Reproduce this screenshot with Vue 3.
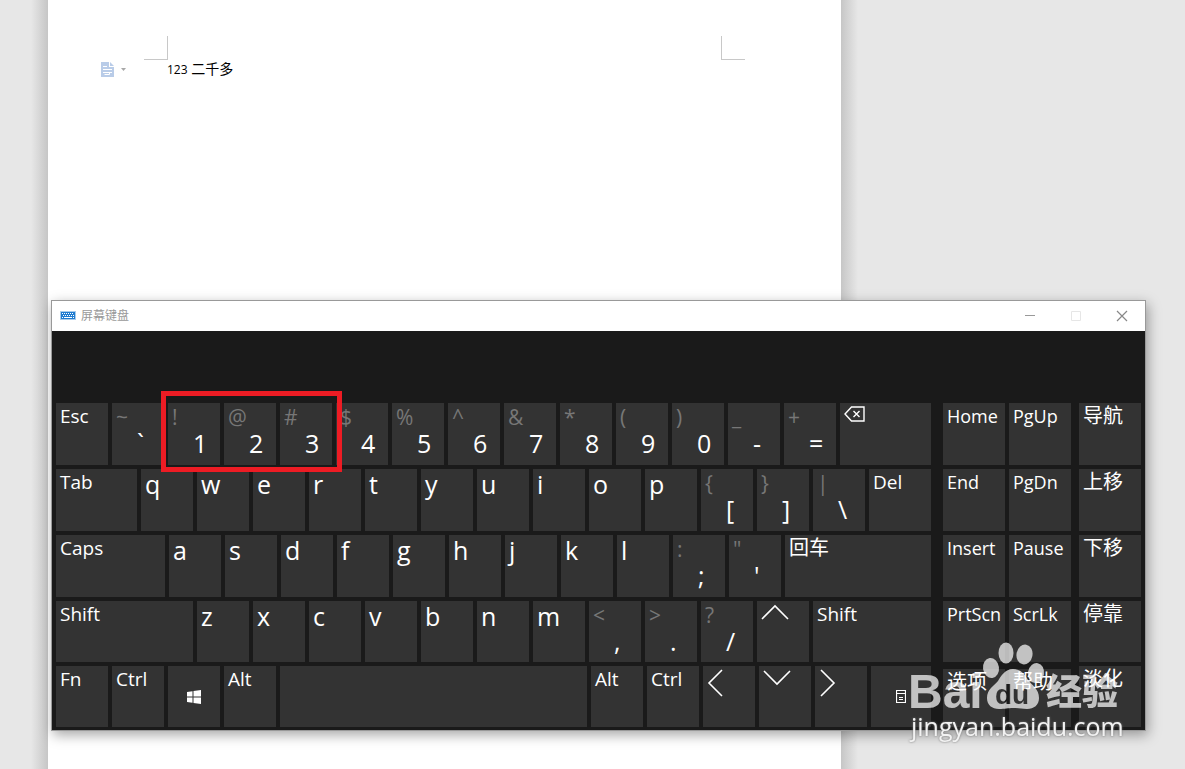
<script setup>
const k = (label, w = 52) => ({ label, w, kind: 'letter' })
const t = (label, w = 52) => ({ label, w, kind: 'word' })
const d = (shift, label) => ({ shift, label, w: 52, kind: 'dual' })
const i = (icon, name, w = 52) => ({ icon, name, w, kind: 'icon' })

const mainRows = [
  [
    t('Esc'), d('~', '`'), d('!', '1'), d('@', '2'), d('#', '3'), d('$', '4'), d('%', '5'), d('^', '6'),
    d('&', '7'), d('*', '8'), d('(', '9'), d(')', '0'), d('_', '-'), d('+', '='), i('back', 'Backspace', 91),
  ],
  [
    t('Tab', 81), ...'qwertyuiop'.split('').map((c) => k(c)),
    d('{', '['), d('}', ']'), d('|', '\\'), t('Del', 62),
  ],
  [
    t('Caps', 109), ...'asdfghjkl'.split('').map((c) => k(c)),
    d(':', ';'), d('"', "'"), { label: '回车', w: 146, kind: 'word cjk' },
  ],
  [
    t('Shift', 137), ...'zxcvbnm'.split('').map((c) => k(c)),
    d('<', ','), d('>', '.'), d('?', '/'), i('up', 'Up'), t('Shift', 118),
  ],
  [
    t('Fn'), t('Ctrl'), i('win', 'Windows'), t('Alt'), { label: '', name: 'Space', w: 307, kind: 'word' },
    t('Alt'), t('Ctrl'), i('left', 'Left'), i('down', 'Down'), i('right', 'Right'), i('menu', 'Menu', 60),
  ],
]

const s = (label, kind = 'word narrow') => ({ label, kind })
const sideRows = [
  [s('Home'), s('PgUp'), s('导航', 'word cjk')],
  [s('End'), s('PgDn'), s('上移', 'word cjk')],
  [s('Insert'), s('Pause'), s('下移', 'word cjk')],
  [s('PrtScn'), s('ScrLk'), s('停靠', 'word cjk')],
  [s('选项', 'word cjk low'), s('帮助', 'word cjk low'), s('淡化', 'word cjk')],
]

const arrows = {
  up: 'M1 15 14 2 27 15',
  down: 'M1 2 14 15 27 2',
  left: 'M15 1 2 14 15 27',
  right: 'M2 1 15 14 2 27',
}
</script>

<template>
  <div class="desktop">
    <main class="page">
      <div class="marks">
        <span class="mark mark-left"></span>
        <span class="mark mark-right"></span>
      </div>
      <div class="line">
        <button class="paste" type="button" aria-label="Page options">
          <svg width="13" height="15" viewBox="0 0 13 15">
            <path d="M0 0h8v5h5v10H0z" fill="#b9cce8" />
            <path d="M9 0l4 4H9z" fill="#b9cce8" />
            <path d="M2 4.500h4M2 7.500h9M2 10.500h9M8.500 10.500v2h-5" fill="none" stroke="#fff" />
          </svg>
          <svg width="5" height="3" viewBox="0 0 5 3"><path d="M0 0h5L2.500 3z" fill="#a8a8a8" /></svg>
        </button>
        <p class="text"><span class="digits">123</span> 二千多</p>
      </div>
    </main>

    <section class="osk">
      <header class="titlebar">
        <svg class="app-icon" width="16" height="10" viewBox="0 0 16 10">
          <rect x=".5" y=".5" width="15" height="8" fill="#1f7bd0" stroke="#a9cbea" />
          <path d="M2 2.500h12M3 4.500h11" stroke="#fff" stroke-dasharray="1 1" />
          <path d="M2 6.500h1M4 6.500h8M13 6.500h1" stroke="#fff" />
        </svg>
        <h1 class="title">屏幕键盘</h1>
        <div class="controls">
          <button type="button" aria-label="Minimize">
            <svg width="12" height="12" viewBox="0 0 12 12"><path d="M1 5.500h10" stroke="#999" /></svg>
          </button>
          <button type="button" aria-label="Maximize" disabled>
            <svg width="12" height="12" viewBox="0 0 12 12"><path d="M1.500 1.500h9v9h-9z" fill="none" stroke="#e6e6e6" /></svg>
          </button>
          <button type="button" aria-label="Close">
            <svg width="12" height="12" viewBox="0 0 12 12"><path d="M1 1l10 10M11 1L1 11" stroke="#888" stroke-width="1.200" /></svg>
          </button>
        </div>
      </header>

      <div class="board">
        <div class="main-keys">
          <div v-for="(row, r) in mainRows" :key="r" class="row">
            <button
              v-for="(key, c) in row"
              :key="c"
              type="button"
              class="key"
              :class="key.kind"
              :style="{ flexGrow: key.w }"
              :aria-label="key.name"
            >
              <template v-if="key.kind === 'dual'">
                <span class="shifted">{{ key.shift }}</span>
                <span class="base">{{ key.label }}</span>
              </template>
              <template v-else-if="key.kind === 'icon'">
                <svg v-if="key.icon === 'back'" class="glyph" width="21" height="16" viewBox="0 0 21 16">
                  <path d="M7.500 1H20v14H7.500L1 8z" fill="none" stroke="#fff" stroke-width="1.400" />
                  <path d="M9.500 5l6 6M15.500 5l-6 6" stroke="#fff" stroke-width="1.400" />
                </svg>
                <svg v-else-if="key.icon === 'win'" class="centred" width="14" height="14" viewBox="0 0 14 14">
                  <path d="M0 2l5.500-.8v5.300H0zM6.500 1L14 0v6.500H6.500zM0 7.500h5.500v5.300L0 12zM6.500 7.500H14V14l-7.500-1z" fill="#fff" />
                </svg>
                <svg v-else-if="key.icon === 'menu'" class="centred" width="10" height="13" viewBox="0 0 10 13">
                  <path d="M.5.5h9v12h-9zM0 3.500h10M3 7.500h4M3 9.500h4" fill="none" stroke="#fff" stroke-width="1.200" />
                </svg>
                <svg v-else-if="key.icon === 'up' || key.icon === 'down'" class="glyph" width="28" height="17" viewBox="0 0 28 17">
                  <path :d="arrows[key.icon]" fill="none" stroke="#fff" stroke-width="1.600" />
                </svg>
                <svg v-else class="glyph" width="17" height="28" viewBox="0 0 17 28">
                  <path :d="arrows[key.icon]" fill="none" stroke="#fff" stroke-width="1.600" />
                </svg>
              </template>
              <span v-else class="label">{{ key.label }}</span>
            </button>
          </div>
          <span class="highlight"></span>
        </div>

        <div class="side-keys">
          <div v-for="(row, r) in sideRows" :key="r" class="row">
            <button v-for="key in row" :key="key.label" type="button" class="key" :class="key.kind">
              <span class="label">{{ key.label }}</span>
            </button>
          </div>
        </div>
      </div>
    </section>

    <svg class="watermark" width="220" height="110" viewBox="0 0 220 110" aria-label="Baidu 经验 jingyan.baidu.com">
      <mask id="paw-mask">
        <rect width="220" height="110" fill="#fff" />
        <text x="88" y="66" class="wm-du">du</text>
      </mask>
      <g fill="#fff" opacity=".7">
        <text x="1" y="70" class="wm-latin">Bai</text>
        <ellipse cx="84" cy="30" rx="8" ry="10" transform="rotate(-8 84 30)" />
        <ellipse cx="99" cy="15" rx="7.500" ry="10.500" />
        <ellipse cx="117.500" cy="16.500" rx="8" ry="10" transform="rotate(10 117.500 16.500)" />
        <ellipse cx="129" cy="35" rx="8" ry="10" transform="rotate(10 129 35)" />
        <path
          mask="url(#paw-mask)"
          d="M106 31C98 31 94 38 91 43C87 48 80 51 80 60C80 67 85 71 92 71C98 71 101 70 106 70C111 70 114 71 120 71C127 71 132 67 132 60C132 51 125 47 121 42C118 37 114 31 106 31Z"
        />
        <text x="139" y="67" class="wm-cjk">经验</text>
      </g>
      <text x="4" y="98" class="wm-url">jingyan.baidu.com</text>
    </svg>
  </div>
</template>

<style>
body {
  margin: 0;
  background: #e7e7e7;
}
</style>

<style scoped>
.desktop {
  position: relative;
  min-height: 100vh;
  overflow: hidden;
  display: flex;
  background: #e7e7e7;
  font-family: "Open Sans", "Noto Sans CJK SC", sans-serif;
}
.page {
  position: relative;
  box-sizing: border-box;
  width: 67.1%;
  margin-left: 47px;
  padding: 36px 96px 0 53px;
  background: #fff;
  border: solid #d8d8d8;
  border-width: 0 1px;
}
.page::before,
.page::after {
  content: "";
  position: absolute;
  top: 0;
  bottom: 0;
  width: 17px;
}
.page::before {
  right: 100%;
  background: linear-gradient(to left, #c6c6c6, #e7e7e7);
}
.page::after {
  left: 100%;
  background: linear-gradient(to right, #c6c6c6, #e7e7e7);
}
.marks {
  display: flex;
  justify-content: space-between;
  margin-left: 43px;
}
.mark {
  width: 23px;
  height: 23px;
  border: 0 solid #c8c8c8;
  border-bottom-width: 1px;
}
.mark-left {
  border-right-width: 1px;
}
.mark-right {
  border-left-width: 1px;
}
.line {
  display: flex;
  align-items: center;
  height: 18px;
}
.paste {
  display: flex;
  align-items: center;
  gap: 7px;
  width: 66px;
  padding: 0;
  border: 0;
  background: none;
}
.text {
  margin: 0;
  font-size: 14px;
  line-height: 18px;
  color: #000;
}
.digits {
  font-size: 12px;
}
.osk {
  position: absolute;
  top: 300px;
  left: 51px;
  right: 39px;
  border: 1px solid #999;
  background: #1a1a1a;
  box-shadow: 2px 4px 12px rgba(0, 0, 0, 0.35);
}
.titlebar {
  display: flex;
  align-items: center;
  height: 30px;
  padding-left: 8px;
  background: #fff;
}
.title {
  margin: 0 auto 0 5px;
  font-size: 12px;
  font-weight: 400;
  line-height: 18px;
  color: #999;
}
.controls {
  display: flex;
}
.controls button {
  display: flex;
  align-items: center;
  justify-content: center;
  width: 46px;
  height: 28px;
  padding: 0;
  border: 0;
  background: none;
}
.board {
  display: flex;
  gap: 12px;
  padding: 72px 4px 3px;
}
.main-keys {
  position: relative;
  flex: 875 1 0;
  display: flex;
  flex-direction: column;
  gap: 4px;
}
.side-keys {
  flex: 198 1 0;
  display: flex;
  flex-direction: column;
  gap: 4px;
}
.row {
  display: flex;
  gap: 4px;
  height: 62px;
}
.row:nth-child(n + 4) {
  height: 61px;
}
.side-keys .key:last-child {
  margin-left: 4px;
}
.key {
  flex: 1 1 0;
  min-width: 0;
  display: flex;
  align-items: flex-start;
  padding: 0;
  border: 0;
  background: #333;
  color: #fff;
  font-family: inherit;
  text-align: left;
  white-space: nowrap;
}
.label {
  margin-left: 4px;
}
.word {
  font-size: 19px;
  line-height: 26px;
}
.narrow {
  font-size: 18px;
}
.cjk {
  font-size: 20px;
}
.low {
  margin-top: 3px;
}
.letter {
  font-size: 25px;
  line-height: 30px;
}
.dual {
  display: grid;
  grid-template-columns: 25px 1fr;
  grid-template-rows: 25px 30px;
}
.shifted {
  margin-left: 4px;
  font-size: 21px;
  line-height: 28px;
  color: #777;
}
.base {
  grid-area: 2 / 2;
  font-size: 25px;
  line-height: 30px;
}
.glyph {
  margin: 3px 0 0 4px;
}
.centred {
  margin: auto;
}
.highlight {
  position: absolute;
  top: -12px;
  left: 12%;
  box-sizing: border-box;
  width: 20.7%;
  height: 81px;
  border: 5px solid #ed1c24;
  pointer-events: none;
}
.watermark {
  position: absolute;
  top: 638px;
  right: 58px;
  pointer-events: none;
}
.wm-latin {
  font: 700 48px "Liberation Sans", sans-serif;
}
.wm-du {
  font: 700 28px "Liberation Sans", sans-serif;
  fill: #000;
}
.wm-cjk {
  font: 900 36px "Noto Sans CJK SC", sans-serif;
}
.wm-url {
  font: 400 25px "Open Sans", sans-serif;
  fill: #f2f2f2;
  filter: drop-shadow(0 0 1px #777);
}
</style>
